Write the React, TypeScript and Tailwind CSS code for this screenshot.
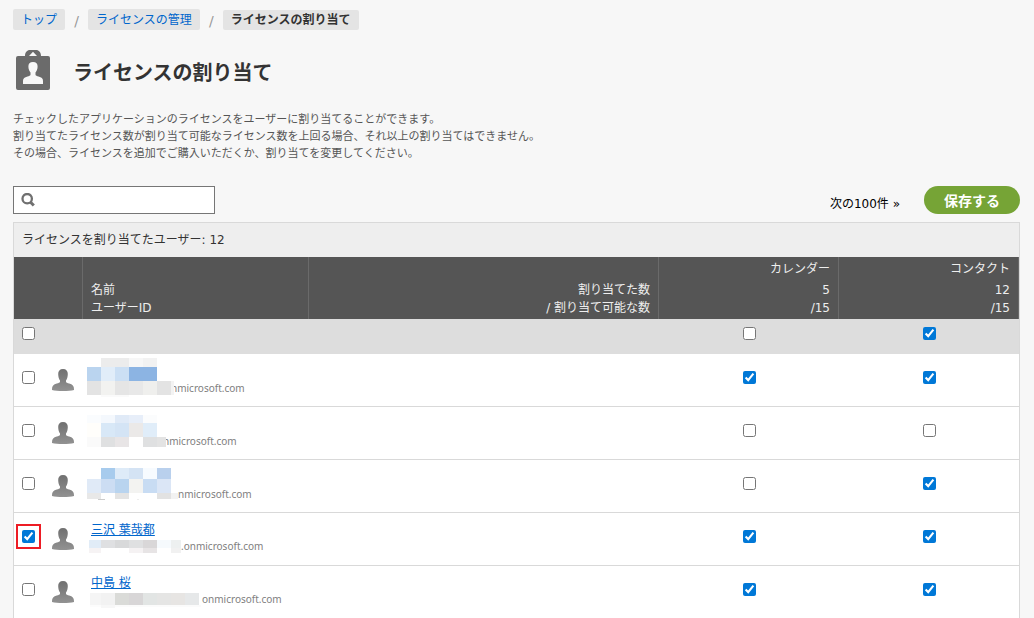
import React, { useState } from 'react';

type Block = [x: number, y: number, width: number, height: number, color: string];

interface User {
  id: string;
  name?: string;
  domain: string;
  mask: Block[];
  maskWidth: number;
  cutDomain?: boolean;
  selected: boolean;
  calendar: boolean;
  contact: boolean;
}

// Names and tenant names are hidden behind mosaic blocks
const USERS: User[] = [
  {
    id: 'u1',
    domain: 'nmicrosoft.com',
    maskWidth: 87,
    mask: [
      [14, 4, 28, 9, '#ececec'], [42, 4, 14, 9, '#f7f7f7'], [56, 4, 14, 9, '#f2f2f2'],
      [0, 13, 14, 14, '#bad4ef'], [14, 13, 14, 14, '#e1edf9'], [28, 13, 14, 14, '#cbdff4'], [42, 13, 28, 14, '#8cb4e3'],
      [0, 27, 14, 14, '#e3e3e3'], [14, 27, 14, 14, '#f2f2f0'], [28, 27, 14, 14, '#e5e5e5'], [42, 27, 14, 14, '#e8e8e8'],
      [56, 27, 14, 14, '#efefed'], [70, 27, 14, 14, '#e3e3e3'], [84, 27, 3, 14, '#f3f3f3'],
      [14, 41, 28, 2, '#fafafa'],
    ],
    cutDomain: true,
    selected: false,
    calendar: true,
    contact: true,
  },
  {
    id: 'u2',
    domain: 'nmicrosoft.com',
    maskWidth: 79,
    mask: [
      [0, 8, 14, 8, '#fafcfe'], [14, 8, 14, 8, '#f4f8fd'], [28, 8, 14, 8, '#e0eaf7'], [42, 8, 14, 8, '#e7eef9'], [56, 8, 14, 8, '#fbfcfd'],
      [0, 16, 14, 14, '#fffefb'], [14, 16, 14, 14, '#d8e8f7'], [28, 16, 14, 14, '#d4e4f5'], [42, 16, 14, 14, '#ebe9e8'], [56, 16, 14, 14, '#e0edf9'],
      [0, 30, 14, 10, '#fafafa'], [14, 30, 14, 10, '#dfe0e1'], [28, 30, 14, 10, '#e8e5e6'], [42, 30, 14, 10, '#ffffff'],
      [56, 30, 14, 10, '#dfe0e1'], [70, 30, 9, 10, '#e3e3e3'],
    ],
    cutDomain: true,
    selected: false,
    calendar: false,
    contact: false,
  },
  {
    id: 'u3',
    domain: 'nmicrosoft.com',
    maskWidth: 91,
    mask: [
      [14, 8, 14, 11, '#a7cbed'], [28, 8, 14, 11, '#deebf8'], [42, 8, 14, 11, '#d4e3f4'], [56, 8, 14, 11, '#f7fbff'], [70, 8, 14, 11, '#b9d0ed'],
      [0, 19, 14, 14, '#e0eaf7'], [14, 19, 14, 14, '#ccddf3'], [28, 19, 14, 14, '#b9d4ef'], [42, 19, 14, 14, '#f3f3f1'],
      [56, 19, 14, 14, '#c8dcf3'], [70, 19, 14, 14, '#dbe6f6'],
      [0, 33, 14, 6, '#e8e8e8'], [28, 33, 14, 6, '#e3e3e3'], [70, 33, 14, 6, '#e2e2e2'], [84, 33, 7, 6, '#f2f2f2'],
      [11, 39, 7, 1, '#cccccc'], [50, 39, 2, 1, '#eeeeee'],
    ],
    selected: false,
    calendar: false,
    contact: true,
  },
  {
    id: 'u4',
    name: '三沢 葉哉都',
    domain: '.onmicrosoft.com',
    maskWidth: 94,
    mask: [
      [2, 0, 12, 8, '#e1ecf7'], [14, 0, 14, 8, '#dfe0e2'], [28, 0, 14, 8, '#d8d9da'], [42, 0, 14, 8, '#dfe0e1'],
      [56, 0, 14, 8, '#d9d7d8'], [70, 0, 14, 8, '#f6fafd'], [84, 0, 10, 8, '#edf0f0'],
      [2, 8, 12, 5, '#f6f3f4'], [42, 8, 14, 5, '#f5f2f3'], [56, 8, 14, 5, '#e7e4e5'], [84, 8, 10, 5, '#f1f1f1'],
    ],
    selected: true,
    calendar: true,
    contact: true,
  },
  {
    id: 'u5',
    name: '中島 桜',
    domain: 'onmicrosoft.com',
    maskWidth: 115,
    mask: [
      [3, 0, 11, 12, '#f5f5f5'], [14, 0, 14, 12, '#f2f2f2'], [28, 0, 14, 12, '#dadbd8'], [42, 0, 14, 12, '#d8d6d7'],
      [56, 0, 14, 12, '#e2e5e4'], [70, 0, 14, 12, '#e5e5e4'], [84, 0, 14, 12, '#e7e5e3'], [98, 0, 14, 12, '#e6e8e9'],
      [3, 12, 11, 2, '#fcfcfc'], [14, 12, 14, 3, '#f7f7f7'], [28, 12, 86, 2, '#fbfbfb'],
    ],
    selected: false,
    calendar: true,
    contact: true,
  },
];

const BadgeIcon = () => (
  <svg className="h-10 w-[34px] shrink-0" viewBox="0 0 34 40" aria-hidden="true">
    <path
      fill="#6b6b6b"
      fillRule="evenodd"
      d="M2 6h7C9 2.500 11 0 14 0h6c3 0 5 2.500 5 6h7a2 2 0 0 1 2 2v30a2 2 0 0 1-2 2H2a2 2 0 0 1-2-2V8a2 2 0 0 1 2-2zM13 6h8l-4-4.200zM17 12c-3.200 0-4.800 2-4.600 4.800.1 2.400.9 4.400 2.100 5.600v2.400c-.3 1-1.500 1.300-3 1.700C8.500 27.300 7 28.500 7 31v3h20v-3c0-2.500-1.500-3.700-4.500-4.500-1.500-.4-2.700-.7-3-1.700v-2.400c1.200-1.200 2-3.200 2.100-5.600C21.800 14 20.200 12 17 12z"
    />
  </svg>
);

const PersonIcon = () => (
  <svg className="h-[22px] w-[22px]" viewBox="0 0 22 22" aria-hidden="true">
    <defs>
      <linearGradient id="person" x1="0" y1="0" x2="0" y2="22" gradientUnits="userSpaceOnUse">
        <stop offset="0" stopColor="#707070" />
        <stop offset="1" stopColor="#929292" />
      </linearGradient>
    </defs>
    <path
      fill="url(#person)"
      d="M11 0C7.800 0 6.100 2 6.200 5c.1 2.800.6 5 1.800 6.500v1.300c-.3 1-1.400 1.300-3.200 1.700C1.500 15.300 0 17 0 20v1c2.500.7 6.500 1 11 1s8.500-.3 11-1v-1c0-3-1.500-4.700-4.800-5.500-1.800-.4-2.900-.7-3.200-1.700v-1.300c1.200-1.500 1.700-3.700 1.800-6.500C15.900 2 14.200 0 11 0z"
    />
  </svg>
);

const Mosaic: React.FC<{ blocks: Block[]; width: number; height: number }> = ({ blocks, width, height }) => (
  <svg className="relative z-10 shrink-0" width={width} height={height} shapeRendering="crispEdges" aria-hidden="true">
    {blocks.map(([x, y, w, h, color]) => (
      <rect key={`${x}-${y}`} x={x} y={y} width={w} height={h} fill={color} />
    ))}
  </svg>
);

interface CheckProps {
  label: string;
  checked: boolean;
  onChange: () => void;
  marked?: boolean;
}

const Check: React.FC<CheckProps> = ({ label, checked, onChange, marked }) => (
  <span className={`inline-block h-[13px] w-[13px] align-top ${marked ? 'outline-2 outline-offset-4 outline-[#ed1c24]' : ''}`}>
    <input
      type="checkbox"
      aria-label={label}
      checked={checked}
      onChange={onChange}
      className="block h-[13px] w-[13px] accent-[#0078d7]"
    />
  </span>
);

const App: React.FC = () => {
  const [users, setUsers] = useState(USERS);
  const [all, setAll] = useState({ selected: false, calendar: false, contact: true });
  const [query, setQuery] = useState('');

  const toggle = (id: string, key: 'selected' | 'calendar' | 'contact') => {
    setUsers(users.map((u) => (u.id === id ? { ...u, [key]: !u[key] } : u)));
  };

  const toggleAll = (key: 'selected' | 'calendar' | 'contact') => {
    const value = !all[key];
    setAll({ ...all, [key]: value });
    setUsers(users.map((u) => ({ ...u, [key]: value })));
  };

  return (
    <div className="min-h-screen bg-[#f7f7f7] pt-[9px] pr-[14px] pl-[13px] font-['DejaVu_Sans','Noto_Sans_CJK_JP',sans-serif] text-xs text-[#333]">
      <nav aria-label="パンくずリスト">
        <ol className="flex items-end">
          <li>
            <a href="#top" className="block rounded-xs bg-[#e4e4e4] px-2 pt-0.5 leading-[19px] text-[#0066cc]">トップ</a>
          </li>
          <li className="w-[23px] text-center text-sm leading-[18px] text-[#999]" aria-hidden="true">/</li>
          <li>
            <a href="#licenses" className="block rounded-xs bg-[#e4e4e4] px-2 pt-0.5 leading-[19px] text-[#0066cc]">ライセンスの管理</a>
          </li>
          <li className="w-[23px] text-center text-sm leading-[18px] text-[#999]" aria-hidden="true">/</li>
          <li className="rounded-xs bg-[#e4e4e4] px-2 leading-5 font-bold" aria-current="page">ライセンスの割り当て</li>
        </ol>
      </nav>

      <header className="mt-5 flex items-center gap-[23px] pl-[3px]">
        <BadgeIcon />
        <h1 className="pt-1.5 text-xl leading-7 font-bold">ライセンスの割り当て</h1>
      </header>

      <p className="mt-[21px] text-[11px] leading-[17px] text-[#555]">
        チェックしたアプリケーションのライセンスをユーザーに割り当てることができます。
        <br />
        割り当てたライセンス数が割り当て可能なライセンス数を上回る場合、それ以上の割り当てはできません。
        <br />
        その場合、ライセンスを追加でご購入いただくか、割り当てを変更してください。
      </p>

      <div className="mt-6 flex items-center justify-between">
        <label className="flex h-7 w-[202px] items-center border border-[#767676] bg-white pl-[7px]">
          <svg className="h-[14px] w-[14px] shrink-0" viewBox="0 0 14 14" fill="none" stroke="#707070" aria-hidden="true">
            <circle cx="6.200" cy="5.700" r="4.700" strokeWidth="2.300" />
            <path d="M9.300 9l3.500 3.500" strokeWidth="3" />
          </svg>
          <input
            type="text"
            aria-label="検索"
            value={query}
            onChange={(e) => setQuery(e.target.value)}
            className="min-w-0 flex-1 px-1 outline-none"
          />
        </label>
        <div className="flex items-center gap-6">
          <a href="#next" className="pt-2 leading-5 text-black">次の100件 »</a>
          <button type="button" className="h-7 w-24 rounded-full bg-[#76a436] pt-0.5 text-sm font-bold text-white">
            保存する
          </button>
        </div>
      </div>

      <section className="mt-2 border border-b-0 border-[#d9d9d9] bg-white">
        <p className="bg-[#eeeeee] px-2 leading-[34px]">ライセンスを割り当てたユーザー: 12</p>
        <table className="w-full table-fixed border-separate border-spacing-0">
          <colgroup>
            <col className="w-[69px]" />
            <col className="w-[226px]" />
            <col />
            <col className="w-[180px]" />
            <col className="w-[180px]" />
          </colgroup>
          <thead className="bg-[#555] text-[#eee]">
            <tr className="align-bottom leading-[18px]">
              <td className="border-r border-[#6a6a6a]" />
              <th className="border-r border-[#6a6a6a] px-2 pb-0.5 text-left font-normal">
                名前
                <br />
                ユーザーID
              </th>
              <th className="border-r border-[#6a6a6a] px-2 pb-0.5 text-right font-normal">
                割り当てた数
                <br />
                / 割り当て可能な数
              </th>
              <th className="border-r border-[#6a6a6a] px-2 pt-[3px] pb-0.5 text-right font-normal">
                <span className="mb-[3px] block">カレンダー</span>
                5
                <br />
                /15
              </th>
              <th className="border-r border-[#6a6a6a] px-2 pt-[3px] pb-0.5 text-right font-normal">
                <span className="mb-[3px] block">コンタクト</span>
                12
                <br />
                /15
              </th>
            </tr>
          </thead>
          <tbody className="align-top">
            <tr className="h-[35px] bg-[#dddddd]">
              <td className="pt-2 pl-2">
                <Check label="すべてのユーザーを選択" checked={all.selected} onChange={() => toggleAll('selected')} />
              </td>
              <td colSpan={2} />
              <td className="pt-2 text-center">
                <Check label="カレンダーをすべて選択" checked={all.calendar} onChange={() => toggleAll('calendar')} />
              </td>
              <td className="pt-2 text-center">
                <Check label="コンタクトをすべて選択" checked={all.contact} onChange={() => toggleAll('contact')} />
              </td>
            </tr>
            {users.map((user) => (
              <tr key={user.id} className="h-[53px]">
                <td className="border-b border-[#d9d9d9] pl-2">
                  <div className="flex gap-[17px]">
                    <div className="pt-[17px]">
                      <Check
                        label="ユーザーを選択"
                        checked={user.selected}
                        onChange={() => toggle(user.id, 'selected')}
                        marked={user.id === 'u4'}
                      />
                    </div>
                    <div className="pt-[15px]">
                      <PersonIcon />
                    </div>
                  </div>
                </td>
                <td className="border-b border-[#d9d9d9] pl-1" colSpan={2}>
                  {user.name && (
                    <a href={`#${user.id}`} className="mt-[7px] ml-1 block w-fit leading-5 text-[#0066cc] underline">
                      {user.name}
                    </a>
                  )}
                  <div className="flex items-end">
                    <Mosaic blocks={user.mask} width={user.maskWidth} height={user.name ? 15 : 43} />
                    <span
                      className={`pb-px font-['Noto_Sans'] text-[10px] leading-4 text-[#808080] ${user.cutDomain ? '-ml-[3px]' : ''} ${user.name ? '-mt-0.5' : ''}`}
                    >
                      {user.domain}
                    </span>
                  </div>
                </td>
                <td className="border-b border-[#d9d9d9] pt-[17px] text-center">
                  <Check label="カレンダー" checked={user.calendar} onChange={() => toggle(user.id, 'calendar')} />
                </td>
                <td className="border-b border-[#d9d9d9] pt-[17px] text-center">
                  <Check label="コンタクト" checked={user.contact} onChange={() => toggle(user.id, 'contact')} />
                </td>
              </tr>
            ))}
          </tbody>
        </table>
      </section>
    </div>
  );
};

export default App;
